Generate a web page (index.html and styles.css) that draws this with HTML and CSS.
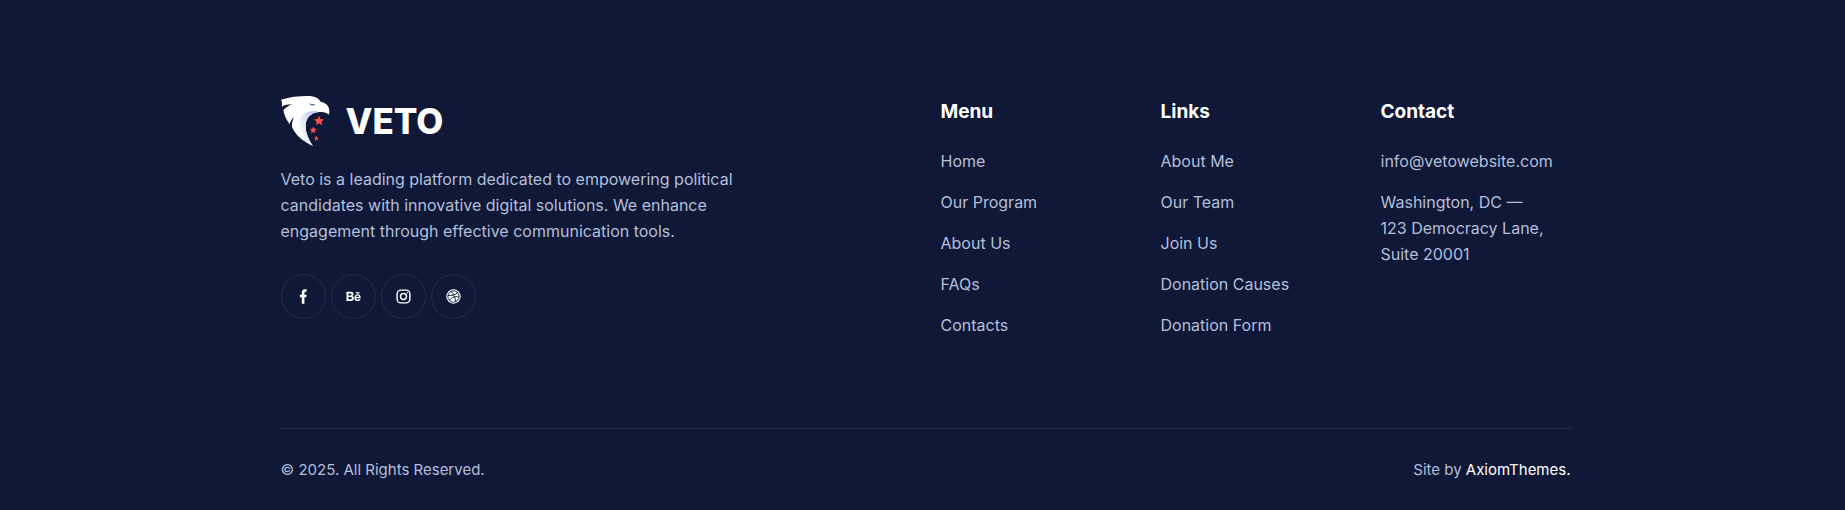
FILE: index.html
```html
<!DOCTYPE html>
<html lang="en">
<head>
<meta charset="utf-8">
<meta name="viewport" content="width=device-width, initial-scale=1">
<title>Veto</title>
<link rel="stylesheet" href="styles.css">
</head>
<body>
<footer class="footer">
  <div class="footer-inner">
    <div class="footer-top">
      <section class="brand">
        <a class="logo" href="#">
          <svg class="logo-mark" viewBox="18 18 150 150" aria-hidden="true">
            <defs>
              <linearGradient id="shade" x1="0" y1="0.6" x2="0.8" y2="0.2">
                <stop offset="0" stop-color="#ffffff"/>
                <stop offset="1" stop-color="#b9c8f6"/>
              </linearGradient>
            </defs>
            <path fill="#fff" d="M18 29C44 21 72 18 97 18C116 18 130 23 137 35C153 38 164 48 163 66C163 69 162 72 161 74C155 67 145 65 132 66C109 68 92 82 92 108C92 130 102 151 114 168C85 155 61 136 51 111C50 102 53 92 56 82C50 88 46 95 44 103C34 89 27 74 25 60C32 53 41 47 52 43C39 43 28 45 20 50C22 42 21 34 18 29Z"/>
            <path fill="url(#shade)" d="M132 66C120 60 99 62 86 72C71 84 66 103 75 124C82 140 96 156 114 168C102 151 92 130 92 108C92 82 109 68 132 66Z"/>
            <path fill="#4963ad" d="M102 39C108 43 114 43 121 42C117 49 107 48 102 39Z"/>
            <g fill="#ff4f49">
              <path d="M132 77L136 87L147 88L139 95L142 106L132 100L123 106L125 95L117 88L128 87Z"/>
              <path d="M115 109L118 116L125 117L119 122L121 130L115 126L108 130L110 122L104 117L112 116Z"/>
              <path d="M124 137L126 142L131 143L127 146L129 152L124 149L119 152L121 146L117 143L122 142Z"/>
            </g>
          </svg>
          <span class="logo-text">VETO</span>
        </a>
        <p class="about">Veto is a leading platform dedicated to empowering political candidates with innovative digital solutions. We enhance engagement through effective communication tools.</p>
        <div class="socials">
          <a class="social" href="#" aria-label="Facebook">
            <svg class="social-icon" viewBox="0 0 16 16" aria-hidden="true"><path fill="currentColor" d="M6.2 15.6V8.8H4.1V6.2H6.2V4C6.2 1.5 7.5.3 9.7.3H11.3V2.8H10.2C9.3 2.8 9 3.2 9 4V6.2H11.3L10.9 8.8H9V15.6Z"/></svg>
          </a>
          <a class="social" href="#" aria-label="Behance">
            <svg class="social-icon" viewBox="0 0 16 16" aria-hidden="true"><path fill="currentColor" fill-rule="evenodd" d="M.5 3H5C7 3 8 3.9 8 5.4C8 6.4 7.5 7.1 6.6 7.5C7.8 7.8 8.4 8.7 8.4 9.8C8.4 11.7 7 12.7 5.1 12.7H.5ZM2.5 4.7V6.9H4.6C5.5 6.9 6 6.5 6 5.8C6 5 5.5 4.7 4.6 4.7ZM2.5 8.4V11H4.8C5.8 11 6.3 10.6 6.3 9.7C6.3 8.8 5.8 8.4 4.8 8.4ZM10.5 3.5H14.4V4.7H10.5ZM12.4 5.5C14.7 5.5 15.8 7.2 15.6 9.8H10.9C11 11 11.6 11.5 12.5 11.5C13.1 11.5 13.6 11.2 13.8 10.7H15.5C15.1 12.2 14 12.9 12.4 12.9C10.3 12.9 9 11.4 9 9.2C9 7 10.4 5.5 12.4 5.5ZM10.9 8.5H13.7C13.6 7.5 13.1 7 12.3 7C11.5 7 11 7.5 10.9 8.5Z"/></svg>
          </a>
          <a class="social" href="#" aria-label="Instagram">
            <svg class="social-icon" viewBox="0 0 16 16" fill="none" stroke="currentColor" stroke-width="1.5" aria-hidden="true"><rect x="1.2" y="1.2" width="13.6" height="13.6" rx="4"/><circle cx="8" cy="8" r="3.2"/><circle cx="12" cy="4" r=".8" fill="currentColor" stroke="none"/></svg>
          </a>
          <a class="social" href="#" aria-label="Dribbble">
            <svg class="social-icon" viewBox="0 0 16 16" aria-hidden="true"><circle cx="8" cy="8" r="7.7" fill="currentColor"/><g fill="none" stroke="#0f1836" stroke-width="1"><circle cx="8" cy="8" r="6"/><path d="M5.3 2.4C8 5.3 9.6 9 10.5 13.5M2 7C6.3 7.1 10.4 6.2 12.6 3.7M3.8 12.4C5.5 8.9 9.3 7.4 14 8.6"/></g></svg>
          </a>
        </div>
      </section>
      <nav class="column" aria-labelledby="menu-title">
        <h2 class="column-title" id="menu-title">Menu</h2>
        <ul class="column-list">
          <li><a class="link" href="#">Home</a></li>
          <li><a class="link" href="#">Our Program</a></li>
          <li><a class="link" href="#">About Us</a></li>
          <li><a class="link" href="#">FAQs</a></li>
          <li><a class="link" href="#">Contacts</a></li>
        </ul>
      </nav>
      <nav class="column" aria-labelledby="links-title">
        <h2 class="column-title" id="links-title">Links</h2>
        <ul class="column-list">
          <li><a class="link" href="#">About Me</a></li>
          <li><a class="link" href="#">Our Team</a></li>
          <li><a class="link" href="#">Join Us</a></li>
          <li><a class="link" href="#">Donation Causes</a></li>
          <li><a class="link" href="#">Donation Form</a></li>
        </ul>
      </nav>
      <section class="column">
        <h2 class="column-title">Contact</h2>
        <ul class="column-list">
          <li><a class="link" href="mailto:info@vetowebsite.com">info@vetowebsite.com</a></li>
          <li>Washington, DC —<br>123 Democracy Lane,<br>Suite 20001</li>
        </ul>
      </section>
    </div>
    <div class="footer-bottom">
      <span>© 2025. All Rights Reserved.</span>
      <span>Site by <a class="author" href="#">AxiomThemes.</a></span>
    </div>
  </div>
</footer>
</body>
</html>
```
FILE: styles.css
```css
* {
  box-sizing: border-box;
}

body {
  margin: 0;
  background: #0f1836;
  color: #b4bfdb;
  font-family: Inter, "Liberation Sans", sans-serif;
  font-size: 16px;
  line-height: 26px;
}

a {
  color: inherit;
  text-decoration: none;
}

.footer {
  padding: 96px 0 27px 6px;
}

.footer-inner {
  max-width: 1290px;
  margin: 0 auto;
}

.footer-top {
  display: grid;
  grid-template-columns: minmax(0, 1fr) 190px 190px 190px;
  column-gap: 30px;
  padding-bottom: 90px;
}

.logo {
  display: flex;
  align-items: center;
  gap: 15px;
  color: #fff;
}

.logo-mark {
  width: 50px;
  height: 50px;
}

.logo-text {
  font-size: 35px;
  font-weight: 800;
  line-height: 50px;
}

.about {
  max-width: 470px;
  margin: 20px 0 30px;
}

.socials {
  display: flex;
  gap: 5px;
}

.social {
  display: grid;
  place-items: center;
  width: 45px;
  height: 45px;
  border: 1px solid #222b50;
  border-radius: 50%;
  color: #fff;
}

.social-icon {
  width: 15px;
  height: 15px;
}

.column-title {
  margin: 3px 0 23px;
  color: #fff;
  font-size: 19px;
  font-weight: 700;
  line-height: 26px;
}

.column-list {
  display: grid;
  gap: 15px;
  margin: 0;
  padding: 0;
  list-style: none;
}

.footer-bottom {
  display: flex;
  justify-content: space-between;
  padding-top: 28px;
  border-top: 1px solid #252d4a;
  font-size: 15px;
}

.author {
  color: #fff;
}
```
